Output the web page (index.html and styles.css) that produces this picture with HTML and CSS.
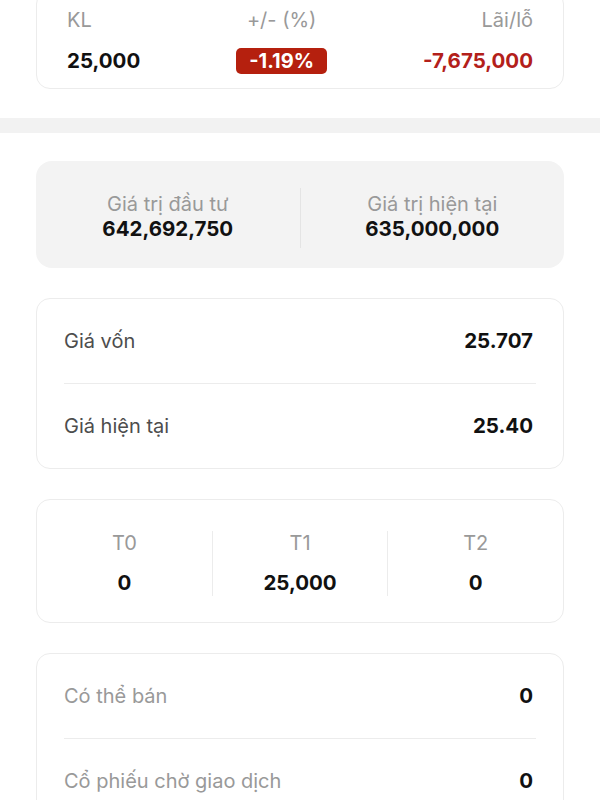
FILE: index.html
```html
<!DOCTYPE html>
<html lang="vi">
<head>
  <meta charset="UTF-8" />
  <meta name="viewport" content="width=device-width, initial-scale=1.0"/>
  <title>Chi tiết cổ phiếu</title>
  <link rel="stylesheet" href="styles.css">
</head>
<body>

<div class="summary-card">
  <div class="summary-col col-left">
    <span class="label">KL</span>
    <span class="value">25,000</span>
  </div>
  <div class="summary-col col-mid">
    <span class="label">+/- (%)</span>
    <span class="badge">-1.19%</span>
  </div>
  <div class="summary-col col-right">
    <span class="label">Lãi/lỗ</span>
    <span class="value loss">-7,675,000</span>
  </div>
</div>

<div class="band"></div>

<div class="content">

  <div class="invest-card">
    <div class="invest-item">
      <div class="label">Giá trị đầu tư</div>
      <div class="value">642,692,750</div>
    </div>
    <div class="vline"></div>
    <div class="invest-item">
      <div class="label">Giá trị hiện tại</div>
      <div class="value">635,000,000</div>
    </div>
  </div>

  <div class="card">
    <div class="row">
      <span class="row-label dark">Giá vốn</span>
      <span class="value">25.707</span>
    </div>
    <div class="row">
      <span class="row-label dark">Giá hiện tại</span>
      <span class="value">25.40</span>
    </div>
  </div>

  <div class="card settle-card">
    <div class="settle-col">
      <div class="label">T0</div>
      <div class="value">0</div>
    </div>
    <div class="settle-col">
      <div class="label">T1</div>
      <div class="value">25,000</div>
    </div>
    <div class="settle-col">
      <div class="label">T2</div>
      <div class="value">0</div>
    </div>
  </div>

  <div class="card">
    <div class="row">
      <span class="row-label">Có thể bán</span>
      <span class="value">0</span>
    </div>
    <div class="row">
      <span class="row-label">Cổ phiếu chờ giao dịch</span>
      <span class="value">0</span>
    </div>
  </div>

</div>

</body>
</html>
```

FILE: styles.css
```css
html, body {
  margin: 0;
  padding: 0;
  font-family: Inter, 'Noto Sans', sans-serif;
  background: #fff;
  color: #111;
}

.label {
  font-size: 20px;
  line-height: 24px;
  color: #999;
}

.value {
  font-size: 20.5px;
  line-height: 26px;
  font-weight: 700;
  color: #111;
}

.value.loss {
  color: #b3201a;
}

/* top summary */
.summary-card {
  margin: -10px 36px 0;
  padding: 17px 30px 14px;
  border: 1px solid #ececec;
  border-radius: 14px;
  display: flex;
  justify-content: space-between;
}

.summary-col {
  display: flex;
  flex-direction: column;
  gap: 16px;
}

.col-left { align-items: flex-start; }
.col-mid { align-items: center; }
.col-right { align-items: flex-end; }

.badge {
  background: #b5200e;
  color: #fff;
  font-size: 20px;
  font-weight: 700;
  line-height: 26px;
  padding: 0 13px;
  border-radius: 5px;
}

.band {
  margin-top: 29px;
  height: 15px;
  background: #f2f2f2;
}

.content {
  padding: 28px 36px;
  display: flex;
  flex-direction: column;
  gap: 30px;
}

/* invest values */
.invest-card {
  background: #f3f3f3;
  border-radius: 16px;
  display: flex;
}

.invest-item {
  flex: 1;
  text-align: center;
  padding: 31px 0 26px;
}

.vline {
  width: 1px;
  height: 60px;
  margin-top: 7px;
  align-self: center;
  background: #e4e4e4;
}

/* bordered cards */
.card {
  border: 1px solid #ececec;
  border-radius: 14px;
  padding: 0 27px;
}

.row {
  height: 84px;
  display: flex;
  align-items: center;
  justify-content: space-between;
  padding-right: 3px;
}

.row + .row {
  border-top: 1px solid #ececec;
}

.row-label {
  font-size: 20px;
  color: #999;
}

.row-label.dark {
  color: #4d4d4d;
}

.settle-card {
  display: flex;
  padding: 31px 0 26px;
}

.settle-col {
  flex: 1;
  display: flex;
  flex-direction: column;
  align-items: center;
  gap: 15px;
}

.settle-col + .settle-col {
  border-left: 1px solid #ececec;
}
```
